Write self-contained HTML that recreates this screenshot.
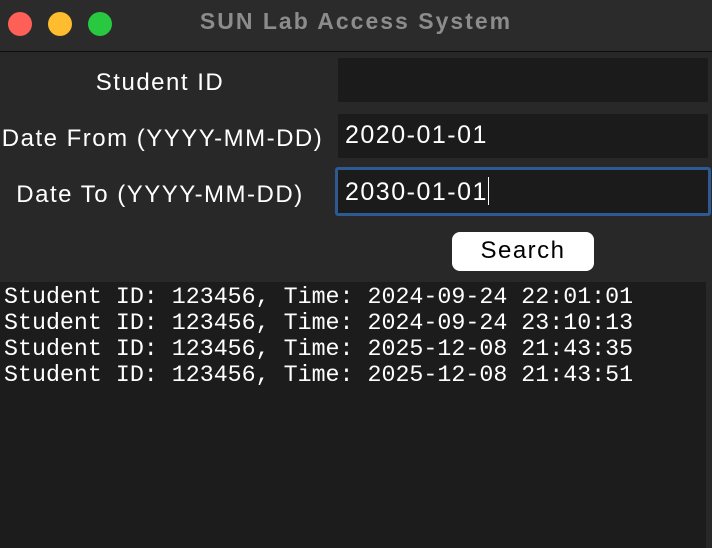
<!DOCTYPE html>
<html><head><style>
*{margin:0;padding:0;box-sizing:border-box}
body{width:712px;height:548px;background:#282828;position:relative;overflow:hidden;font-family:"Liberation Sans",sans-serif;color:#fff}
.tb{position:absolute;left:0;top:0;width:712px;height:52px;background:#2b2b2b;border-bottom:1px solid #0c0c0c}
.dot{position:absolute;top:12px;width:24px;height:24px;border-radius:50%}
.title{position:absolute;top:8px;left:0;width:712px;text-align:center;font-weight:bold;font-size:23px;color:#8c8c8c;letter-spacing:2px}
.lbl{position:absolute;font-size:24px;text-align:center;letter-spacing:1.5px}
.f{position:absolute;left:338px;width:370px;height:44px;background:#1b1b1b;font-size:25px;letter-spacing:1.5px;padding:7px 0 0 7px}
.btn{position:absolute;left:452px;top:232px;width:142px;height:39px;background:#fff;border-radius:8px;color:#000;font-size:24px;letter-spacing:1.5px;text-align:center;line-height:38px}
.out{position:absolute;left:0;top:282px;width:706px;height:266px;background:#1c1c1c;font-family:"Liberation Mono",monospace;font-size:23.3px;line-height:26px;padding:2px 0 0 4px;white-space:pre}
</style></head><body>
<div class="tb">
<div class="dot" style="left:8px;background:#fe5f57"></div>
<div class="dot" style="left:48px;background:#febc2e"></div>
<div class="dot" style="left:88px;background:#28c840"></div>
<div class="title">SUN Lab Access System</div>
</div>
<div class="lbl" style="left:0;width:320px;top:69px">Student ID</div>
<div class="lbl" style="left:0;width:325px;top:125px">Date From (YYYY-MM-DD)</div>
<div class="lbl" style="left:0;width:320px;top:181px">Date To (YYYY-MM-DD)</div>
<div class="f" style="top:58px"></div>
<div class="f" style="top:114px">2020-01-01</div>
<div class="f" style="left:335px;top:167px;width:376px;height:49px;border:3px solid #2d5a93;border-radius:3px;padding:7px 0 0 7px">2030-01-01<span style="display:inline-block;width:1px;height:28px;background:#fff;vertical-align:-5px"></span></div>
<div class="btn">Search</div>
<div class="out">Student ID: 123456, Time: 2024-09-24 22:01:01
Student ID: 123456, Time: 2024-09-24 23:10:13
Student ID: 123456, Time: 2025-12-08 21:43:35
Student ID: 123456, Time: 2025-12-08 21:43:51</div>
</body></html>
